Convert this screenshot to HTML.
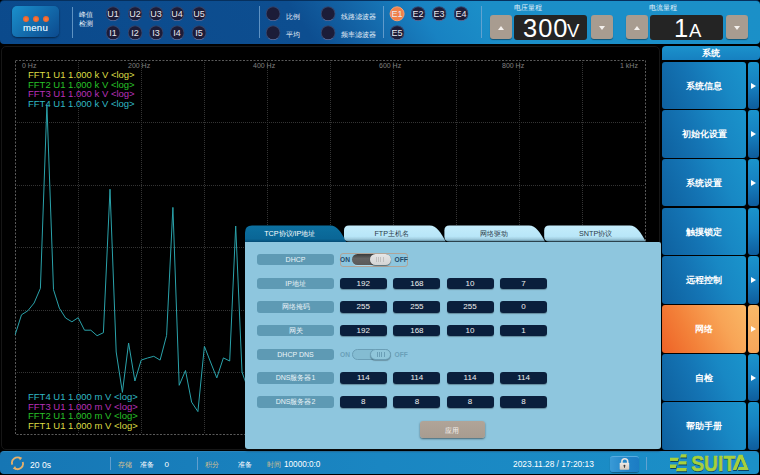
<!DOCTYPE html>
<html><head><meta charset="utf-8">
<style>
*{margin:0;padding:0;box-sizing:border-box}
html,body{width:760px;height:475px;overflow:hidden;background:#000;font-family:"Liberation Sans",sans-serif}
.abs{position:absolute}
#hdr{left:0;top:0;width:759.5px;height:44px;border-radius:4px;
 background:linear-gradient(55deg,#0b4a8c 0%,#0d4e90 40%,#1466a8 48%,#1882c2 56%,#1b8ec8 64%,#1b90c8 100%);border-top:1px solid #06305e}
#menu{left:12px;top:6px;width:47px;height:31px;border-radius:5px;
 background:linear-gradient(135deg,#1a90cc 0%,#1470b0 45%,#0c4a8e 100%);box-shadow:0 1px 2px rgba(0,0,0,.5)}
.dot{width:6px;height:6px;border-radius:50%;background:radial-gradient(circle at 50% 55%,#ff7a40,#e05a20);top:10px}
#menu .t{left:0;width:47px;top:15.5px;text-align:center;color:#cfe6f8;font-size:9.6px;font-weight:normal;letter-spacing:.3px;text-shadow:0 0 .4px #cfe6f8}
.vdiv{width:1.3px;background:#7aaad4;opacity:.75}
.cn{color:#e8f0f8;font-size:7px;line-height:9px}
.circ{width:15px;height:15px;border-radius:50%;background:#1c1c38;border:1px solid #34466e;border-bottom-color:#5a6a98;color:#e8e8f0;font-size:9px;text-align:center;line-height:14.5px;transform:translate(.6px,.3px)}
.btn{width:22px;height:24px;border-radius:3px;background:#a89c90;box-shadow:0 1px 1px rgba(0,0,0,.4)}
.btn i{position:absolute;left:7.5px;width:0;height:0;border-left:3.6px solid transparent;border-right:3.6px solid transparent}
.btn i.u{top:10.8px;border-bottom:4px solid #f4f0ec}
.btn i.d{top:10.8px;border-top:4px solid #f4f0ec}
.disp{height:25px;border-radius:3px;background:#242424;color:#fff;text-align:center;white-space:nowrap}
.disp b{font-weight:normal;font-size:25.5px;line-height:27px}
.disp s{text-decoration:none;font-size:18.5px;line-height:20px}
.lbl{font-size:7px;color:#e8f4fc}
#chart{left:1px;top:45.5px;width:659px;height:404.5px;border:1px solid #161616;border-radius:5px;background:#000}
.ax{font-size:7px;color:#808080;top:62px}
.leg{font-size:9.5px;line-height:9.5px;left:28px;white-space:pre}
.y{color:#dcdc44}.g{color:#28c028}.m{color:#b830b8}.c{color:#30b8c4}
#side .b{position:absolute;left:662px;width:84px;height:47.6px;margin-top:-.3px;border-radius:3px;
 background:linear-gradient(65deg,#0e609e 0%,#1474b4 40%,#1888c4 70%,#1a94cc 100%);color:#fff;font-size:9px;font-weight:bold;text-align:center;line-height:48px}
#side .a{position:absolute;left:747.8px;width:11px;height:47.6px;margin-top:-.3px;border-radius:3px;
 background:linear-gradient(175deg,#1a94cc 0%,#1680c0 50%,#0e5c9c 100%)}
#side .a i{position:absolute;left:3px;top:21px;width:0;height:0;border-left:5px solid #fff;border-top:3.5px solid transparent;border-bottom:3.5px solid transparent}
#side .b.o{background:linear-gradient(62deg,#ee6226 0%,#f3823a 35%,#f8a456 70%,#fab866 100%)}
#side .a.o{background:linear-gradient(180deg,#f9b868 0%,#f6a65a 100%)}
#stat{left:0;top:451px;width:759px;height:23px;border-radius:4px;border-top:1px solid #2a84bc;background:linear-gradient(90deg,#1676b4 0%,#1a86c2 50%,#1b90c8 100%)}
.st{font-size:7px;color:#fff;top:461px;line-height:8px}
.tan{color:#d8c090}
#dlg{left:245px;top:225px;width:416px;height:224px}
#body{left:0;top:16.5px;width:415.5px;height:207.5px;background:#8ec6de;border-radius:0 2px 3px 3px;box-shadow:0 1.5px 2px rgba(0,0,0,.6)}
.tab{top:0;height:17px;color:#2a3a4a;font-size:8px;text-align:center;line-height:17px}
.rl{left:12px;width:77px;height:11.6px;margin-top:-.2px;border-radius:3px;background:#5e9ab4;color:#eaf4f8;font-size:7px;text-align:center;line-height:11.8px}
.vb{width:47px;height:11.6px;margin-top:-.2px;border-radius:3px;background:#0a1f3c;color:#f0f0f0;font-size:8px;text-align:center;line-height:12.1px;box-shadow:0 1px 1px rgba(0,0,0,.3)}
</style></head><body>

<!-- header -->
<div id="hdr" class="abs"></div>
<div id="menu" class="abs">
 <div class="abs dot" style="left:11px"></div>
 <div class="abs dot" style="left:21px"></div>
 <div class="abs dot" style="left:31px"></div>
 <div class="abs t">menu</div>
</div>
<div class="abs vdiv" style="left:72px;top:7px;height:31px"></div>
<div class="abs cn" style="left:79px;top:11px;font-size:6.8px;line-height:8.5px">峰值<br>检测</div>

<div class="abs circ" style="left:105px;top:6px">U1</div>
<div class="abs circ" style="left:127px;top:6px">U2</div>
<div class="abs circ" style="left:148px;top:6px">U3</div>
<div class="abs circ" style="left:169px;top:6px">U4</div>
<div class="abs circ" style="left:191px;top:6px">U5</div>
<div class="abs circ" style="left:105px;top:25px">I1</div>
<div class="abs circ" style="left:127px;top:25px">I2</div>
<div class="abs circ" style="left:148px;top:25px">I3</div>
<div class="abs circ" style="left:169px;top:25px">I4</div>
<div class="abs circ" style="left:191px;top:25px">I5</div>

<div class="abs vdiv" style="left:259px;top:6px;height:32px"></div>
<div class="abs circ" style="left:265px;top:6px"></div>
<div class="abs circ" style="left:265px;top:25px"></div>
<div class="abs cn" style="left:286px;top:12px">比例</div>
<div class="abs cn" style="left:286px;top:30px">平均</div>
<div class="abs circ" style="left:320px;top:6px"></div>
<div class="abs circ" style="left:320px;top:25px"></div>
<div class="abs cn" style="left:341px;top:12px">线路滤波器</div>
<div class="abs cn" style="left:341px;top:30px">频率滤波器</div>

<div class="abs vdiv" style="left:383px;top:6px;height:32px"></div>
<div class="abs circ" style="left:389px;top:6px;background:#f0804a;border-color:#f8a070">E1</div>
<div class="abs circ" style="left:410px;top:6px">E2</div>
<div class="abs circ" style="left:431px;top:6px">E3</div>
<div class="abs circ" style="left:453px;top:6px">E4</div>
<div class="abs circ" style="left:389px;top:25px">E5</div>
<div class="abs vdiv" style="left:481px;top:6px;height:32px"></div>

<div class="abs lbl" style="left:514px;top:3px">电压量程</div>
<div class="abs btn" style="left:490px;top:15px"><i class="u"></i></div>
<div class="abs disp" style="left:514px;top:15px;width:73px"><b class="abs" style="left:9px;top:0;letter-spacing:1px">300</b><s class="abs" style="left:53px;top:6px">V</s></div>
<div class="abs btn" style="left:591px;top:15px"><i class="d"></i></div>
<div class="abs lbl" style="left:649px;top:3px">电流量程</div>
<div class="abs btn" style="left:626px;top:15px"><i class="u"></i></div>
<div class="abs disp" style="left:650px;top:15px;width:73px"><b class="abs" style="left:24px;top:0">1</b><s class="abs" style="left:39px;top:6px">A</s></div>
<div class="abs btn" style="left:726px;top:15px"><i class="d"></i></div>

<!-- chart -->
<div id="chart" class="abs"></div>
<svg class="abs" style="left:0;top:0" width="760" height="475"><g stroke="#343434" stroke-width="1" stroke-dasharray="1,1"><line x1="78.5" y1="60" x2="78.5" y2="434" /><line x1="141.5" y1="60" x2="141.5" y2="434" /><line x1="204.5" y1="60" x2="204.5" y2="434" /><line x1="267.5" y1="60" x2="267.5" y2="434" /><line x1="330.5" y1="60" x2="330.5" y2="434" /><line x1="393.5" y1="60" x2="393.5" y2="434" /><line x1="456.5" y1="60" x2="456.5" y2="434" /><line x1="519.5" y1="60" x2="519.5" y2="434" /><line x1="582.5" y1="60" x2="582.5" y2="434" /><line x1="15" y1="122.5" x2="645" y2="122.5" /><line x1="15" y1="185.5" x2="645" y2="185.5" /><line x1="15" y1="247.5" x2="645" y2="247.5" /><line x1="15" y1="310.5" x2="645" y2="310.5" /><line x1="15" y1="372.5" x2="645" y2="372.5" /></g><rect x="15.5" y="60.5" width="630" height="374" fill="none" stroke="#5a5a5a" stroke-width="1" stroke-dasharray="2,1.5"/><polyline points="15.2,334.6 21.5,314.8 27.8,310.8 34.1,303 40.4,288.3 46.9,104.7 53.5,289.7 59.3,308.1 65.6,318 71.9,321.8 78.2,317.7 84.5,330.2 90.8,330.2 97.1,335.7 103.4,332.7 110.0,189.2 116.2,352 122.4,392.4 128.6,343 134.9,381 141.2,360.1 147.5,358 153.8,356.3 160.1,360.1 166.6,335.4 172.9,207.4 179.2,385.3 185.5,370.5 191.6,402.1 197.9,411.6 204.4,346.3 210.5,362 216.8,377.9 223.4,357.9 229.7,361 235.7,226 242,372 248.3,390" fill="none" stroke="#2aa2aa" stroke-width="1" stroke-linejoin="miter"/></svg>
<div class="abs ax" style="left:22px">0 Hz</div>
<div class="abs ax" style="left:128px">200 Hz</div>
<div class="abs ax" style="left:253px">400 Hz</div>
<div class="abs ax" style="left:379px">600 Hz</div>
<div class="abs ax" style="left:502px">800 Hz</div>
<div class="abs ax" style="left:620px">1 kHz</div>
<div class="abs leg" style="top:70px"><span class="y">FFT1 U1 1.000 k V &lt;log&gt;</span>
<span class="g">FFT2 U1 1.000 k V &lt;log&gt;</span>
<span class="m">FFT3 U1 1.000 k V &lt;log&gt;</span>
<span class="c">FFT4 U1 1.000 k V &lt;log&gt;</span></div>
<div class="abs leg" style="top:392px"><span class="c">FFT4 U1 1.000 m V &lt;log&gt;</span>
<span class="m">FFT3 U1 1.000 m V &lt;log&gt;</span>
<span class="g">FFT2 U1 1.000 m V &lt;log&gt;</span>
<span class="y">FFT1 U1 1.000 m V &lt;log&gt;</span></div>

<!-- sidebar -->
<div class="abs" style="left:662px;top:45.5px;width:97.5px;height:14.5px;border-radius:4px 4px 4px 0;background:linear-gradient(180deg,#1b92cc,#1680c0);color:#fff;font-size:9px;font-weight:bold;text-align:center;line-height:15px">系统</div>
<div id="side">
 <div class="b" style="top:61.8px">系统信息</div><div class="a" style="top:61.8px"><i></i></div>
 <div class="b" style="top:110.5px">初始化设置</div><div class="a" style="top:110.5px"><i></i></div>
 <div class="b" style="top:159.2px">系统设置</div><div class="a" style="top:159.2px"><i></i></div>
 <div class="b" style="top:207.9px">触摸锁定</div><div class="a" style="top:207.9px"></div>
 <div class="b" style="top:256.6px">远程控制</div><div class="a" style="top:256.6px"><i></i></div>
 <div class="b o" style="top:305.3px">网络</div><div class="a o" style="top:305.3px"><i></i></div>
 <div class="b" style="top:354.0px">自检</div><div class="a" style="top:354.0px"><i></i></div>
 <div class="b" style="top:402.7px">帮助手册</div><div class="a" style="top:402.7px"></div>
</div>

<!-- status -->
<div id="stat" class="abs"></div>
<svg class="abs" style="left:10px;top:456px" width="15" height="15" viewBox="0 0 15 15"><path d="M2.3 8.6A5.3 5.3 0 0 1 10.5 2.6" fill="none" stroke="#e6b06a" stroke-width="1.8"/><path d="M12.7 6A5.3 5.3 0 0 1 4.5 12" fill="none" stroke="#e6b06a" stroke-width="1.8"/><path d="M8.6 0.6l3.6 1.2-2.3 2.8z" fill="#e6b06a"/><path d="M6.4 14l-3.6-1.2 2.3-2.8z" fill="#e6b06a"/></svg>
<div class="abs st" style="left:30px;font-size:8.6px;top:461px">20 0s</div>
<div class="abs vdiv" style="left:110px;top:456.6px;height:13.2px"></div>
<div class="abs st tan" style="left:118px">存储</div>
<div class="abs st" style="left:140px">准备</div>
<div class="abs st" style="left:164.5px;font-size:8px;top:460.5px">0</div>
<div class="abs vdiv" style="left:197px;top:456.6px;height:13.2px"></div>
<div class="abs st tan" style="left:205px">积分</div>
<div class="abs st" style="left:238px">准备</div>
<div class="abs st tan" style="left:267px">时间</div>
<div class="abs st" style="left:284px;font-size:8.2px;top:460.5px">10000:0:0</div>
<div class="abs st" style="left:513px;font-size:8.4px;top:460px">2023.11.28 / 17:20:13</div>
<div class="abs" style="left:610.3px;top:456.3px;width:28.7px;height:16.2px;border-radius:3px;background:linear-gradient(90deg,#3a9ad6,#2084c8 60%,#1c7cc4);border-top:1px solid #58ace0;box-shadow:0 1px 1px rgba(0,0,0,.35)"></div>
<svg class="abs" style="left:618px;top:457px" width="14" height="14" viewBox="0 0 14 14"><defs><linearGradient id="lk" x1="0" y1="0" x2="0" y2="1"><stop offset="0" stop-color="#eeeae6"/><stop offset="1" stop-color="#d4c8bc"/></linearGradient></defs><path d="M3.9 6V4.6a2.9 2.9 0 0 1 5.8 0V6" fill="none" stroke="#e6e2de" stroke-width="1.6"/><rect x="1.7" y="5.7" width="9.5" height="7.1" rx="0.8" fill="url(#lk)"/><circle cx="6.45" cy="8.7" r="1" fill="#3a3a3a"/><rect x="6" y="8.8" width="0.9" height="2" fill="#3a3a3a"/></svg>
<div class="abs vdiv" style="left:646px;top:456.7px;height:13px"></div>
<svg class="abs" style="left:666px;top:451px" width="94" height="24" viewBox="0 0 94 24"><polygon points="15.54,4.10 21.00,4.10 21.00,7.50 14.52,7.50" fill="#0a3f62"/><polygon points="4.40,7.60 13.29,7.60 12.27,11.00 4.40,11.00" fill="#0a3f62"/><polygon points="13.44,11.10 21.00,11.10 21.00,14.40 12.45,14.40" fill="#0a3f62"/><polygon points="4.40,14.50 11.22,14.50 10.20,17.90 4.40,17.90" fill="#0a3f62"/><polygon points="11.37,18.00 21.00,18.00 21.00,21.20 10.41,21.20" fill="#0a3f62"/><polygon points="15.14,3.20 20.60,3.20 20.60,6.60 14.12,6.60" fill="#a6d03c"/><polygon points="4.00,6.70 12.89,6.70 11.87,10.10 4.00,10.10" fill="#a6d03c"/><polygon points="13.04,10.20 20.60,10.20 20.60,13.50 12.05,13.50" fill="#a6d03c"/><polygon points="4.00,13.60 10.82,13.60 9.80,17.00 4.00,17.00" fill="#a6d03c"/><polygon points="10.97,17.10 20.60,17.10 20.60,20.30 10.01,20.30" fill="#a6d03c"/><text x="25.2" y="19.6" font-family="Liberation Sans, sans-serif" font-weight="bold" font-size="21.8" fill="#0a3f62" textLength="44" lengthAdjust="spacingAndGlyphs" transform="translate(0.4,0.9)">SUIT</text><polygon points="73.20,4.70 77.00,4.70 83.20,19.90 72.00,19.90 73.20,16.90 78.40,16.90 75.10,8.80 70.80,19.90 67.00,19.90" fill="#0a3f62"/><text x="25.2" y="19.6" font-family="Liberation Sans, sans-serif" font-weight="bold" font-size="21.8" fill="#a6d03c" stroke="#a6d03c" stroke-width="0.5" textLength="44" lengthAdjust="spacingAndGlyphs">SUIT</text><polygon points="72.80,3.80 76.60,3.80 82.80,19.00 71.60,19.00 72.80,16.00 78.00,16.00 74.70,7.90 70.40,19.00 66.60,19.00" fill="#a6d03c"/></svg>

<!-- dialog -->
<div id="dlg" class="abs">
<svg class="abs" style="left:0;top:0" width="416" height="20"><defs><linearGradient id="ti" x1="0" y1="0" x2="0" y2="1"><stop offset="0" stop-color="#c4ecfb"/><stop offset="0.68" stop-color="#b8e6f8"/><stop offset="0.85" stop-color="#a0ccde"/><stop offset="1" stop-color="#5a8aa0"/></linearGradient><linearGradient id="ta" x1="0" y1="0" x2="0" y2="1"><stop offset="0" stop-color="#0c70a0"/><stop offset="0.8" stop-color="#0a6696"/><stop offset="1" stop-color="#06507a"/></linearGradient></defs><path d="M7,0.5 L85.3,0.5 C92.3,0.5 96.3,7.5 101.3,17.0 L0,17.0 L0,7.5 Q0,0.5 7,0.5 Z" fill="url(#ta)"/><text x="44.8" y="11.3" text-anchor="middle" fill="#ffffff" font-size="7.2" font-family="Liberation Sans, sans-serif">TCP协议/IP地址</text><path d="M104,0.5 L184.7,0.5 C191.7,0.5 195.7,7.5 200.7,16.5 L104,16.5 Q99,16.5 99,11.5 L99,5.5 Q99,0.5 104,0.5 Z" fill="url(#ti)"/><text x="146.7" y="11.3" text-anchor="middle" fill="#2a3a48" font-size="7.2" font-family="Liberation Sans, sans-serif">FTP主机名</text><path d="M204.4,0.5 L284,0.5 C291,0.5 295,7.5 300,16.5 L204.4,16.5 Q199.4,16.5 199.4,11.5 L199.4,5.5 Q199.4,0.5 204.4,0.5 Z" fill="url(#ti)"/><text x="249.3" y="11.3" text-anchor="middle" fill="#2a3a48" font-size="7.2" font-family="Liberation Sans, sans-serif">网络驱动</text><path d="M304.2,0.5 L384.7,0.5 C391.7,0.5 395.7,7.5 400.7,16.5 L304.2,16.5 Q299.2,16.5 299.2,11.5 L299.2,5.5 Q299.2,0.5 304.2,0.5 Z" fill="url(#ti)"/><text x="350.6" y="11.3" text-anchor="middle" fill="#2a3a48" font-size="7.2" font-family="Liberation Sans, sans-serif">SNTP协议</text></svg>
<div id="body" class="abs"></div>
 <div class="abs rl" style="top:29px">DHCP</div>
 <div class="abs rl" style="top:53px">IP地址</div>
 <div class="abs vb" style="left:94.8px;top:53px">192</div>
 <div class="abs vb" style="left:148.4px;top:53px">168</div>
 <div class="abs vb" style="left:201.5px;top:53px">10</div>
 <div class="abs vb" style="left:255.1px;top:53px">7</div>
 <div class="abs rl" style="top:76.5px">网络掩码</div>
 <div class="abs vb" style="left:94.8px;top:76.5px">255</div>
 <div class="abs vb" style="left:148.4px;top:76.5px">255</div>
 <div class="abs vb" style="left:201.5px;top:76.5px">255</div>
 <div class="abs vb" style="left:255.1px;top:76.5px">0</div>
 <div class="abs rl" style="top:100px">网关</div>
 <div class="abs vb" style="left:94.8px;top:100px">192</div>
 <div class="abs vb" style="left:148.4px;top:100px">168</div>
 <div class="abs vb" style="left:201.5px;top:100px">10</div>
 <div class="abs vb" style="left:255.1px;top:100px">1</div>
 <div class="abs rl" style="top:124px">DHCP DNS</div>
 <div class="abs rl" style="top:147.5px">DNS服务器1</div>
 <div class="abs vb" style="left:94.8px;top:147.5px">114</div>
 <div class="abs vb" style="left:148.4px;top:147.5px">114</div>
 <div class="abs vb" style="left:201.5px;top:147.5px">114</div>
 <div class="abs vb" style="left:255.1px;top:147.5px">114</div>
 <div class="abs rl" style="top:171.5px">DNS服务器2</div>
 <div class="abs vb" style="left:94.8px;top:171.5px">8</div>
 <div class="abs vb" style="left:148.4px;top:171.5px">8</div>
 <div class="abs vb" style="left:201.5px;top:171.5px">8</div>
 <div class="abs vb" style="left:255.1px;top:171.5px">8</div>
 <div class="abs" style="left:94.5px;top:27.5px;width:68.5px;height:14.5px;border:1px solid #b0a498;border-radius:3px"></div><div class="abs" style="left:95px;top:30px;font-size:6.6px;font-weight:bold;color:#1e4a6a;line-height:9px">ON</div><div class="abs" style="left:149.5px;top:30px;font-size:6.6px;font-weight:bold;color:#1e4a6a;line-height:9px">OFF</div><div class="abs" style="left:107px;top:28.5px;width:39.2px;height:11.5px;border-radius:6px;background:linear-gradient(180deg,#3a3a3a,#626262 40%,#5a5a5a);box-shadow:0 1px 0 rgba(255,255,255,.3)"></div><div class="abs" style="left:125px;top:28.5px;width:21.2px;height:11.5px;border-radius:6px;background:linear-gradient(180deg,#e6e6e6,#d4d4d4);box-shadow:0 1px 1px rgba(0,0,0,.5)"><div class="abs" style="left:6px;top:3px;width:9px;height:5px;background:repeating-linear-gradient(90deg,#c0c0c0 0 1px,transparent 1px 2.2px)"></div></div>
 <div class="abs" style="left:95px;top:125px;font-size:6.6px;font-weight:bold;color:#6aa0b8;line-height:9px">ON</div><div class="abs" style="left:149.5px;top:125px;font-size:6.6px;font-weight:bold;color:#6aa0b8;line-height:9px">OFF</div><div class="abs" style="left:107px;top:123.5px;width:39.2px;height:11.5px;border-radius:6px;background:#84bcd2;border:1px solid #6a9eb6"></div><div class="abs" style="left:125px;top:123.5px;width:21.2px;height:11.5px;border-radius:6px;background:#90c6da;border:1px solid #6a9eb6;box-shadow:0 1px 1px rgba(0,0,0,.25)"><div class="abs" style="left:6px;top:2px;width:9px;height:5px;background:repeating-linear-gradient(90deg,#6a9eb6 0 1px,transparent 1px 2.2px)"></div></div>
 <div class="abs" style="left:174.7px;top:195.5px;width:65.6px;height:17.4px;border-radius:3px;background:linear-gradient(180deg,#b0a498,#a89c90);box-shadow:0 1px 2px rgba(0,0,0,.5);color:#f4f0ec;font-size:7px;text-align:center;line-height:19px">应用</div>
</div>
</body></html>
